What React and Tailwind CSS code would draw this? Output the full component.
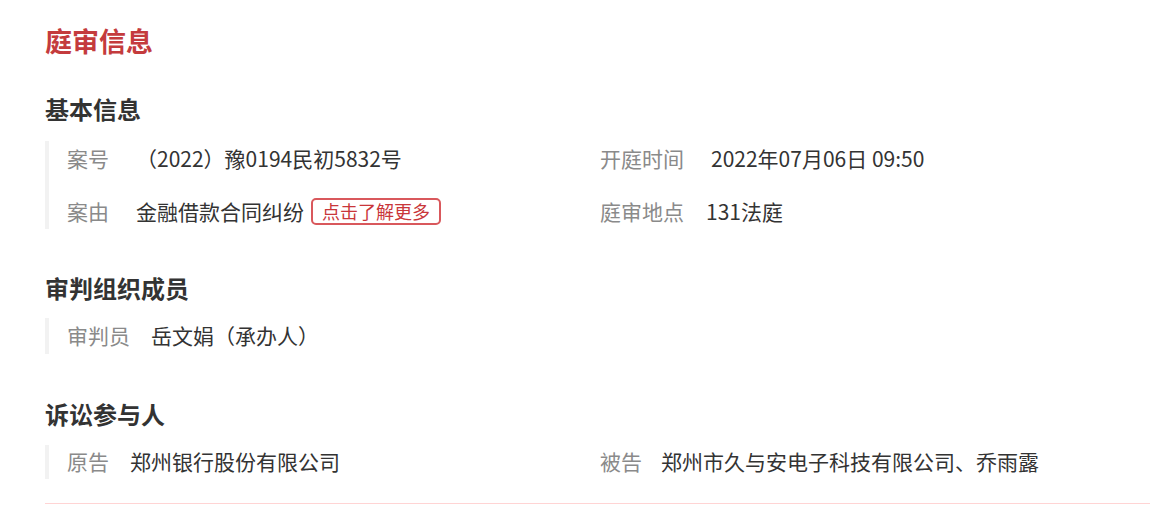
import React from 'react';

const basic = [
  [
    { label: '案号', value: '（2022）豫0194民初5832号', gap: 'ml-[27px]' },
    { label: '开庭时间', value: '2022年07月06日 09:50', gap: 'ml-[27px]' },
  ],
  [
    { label: '案由', value: '金融借款合同纠纷', gap: 'ml-[27px]', tag: '点击了解更多' },
    { label: '庭审地点', value: '131法庭', gap: 'ml-[22px]' },
  ],
];

const Field = ({ label, value, gap = 'ml-[21px]', tag }) => (
  <div className="flex items-center h-8 leading-8 whitespace-nowrap">
    <span className="text-[#8a8a8a]">{label}</span>
    <span className={`${gap} text-[#333]`}>{value}</span>
    {tag && (
      <span className="ml-[7px] h-[27px] leading-[23px] px-[9px] border-2 border-[#d9585c] rounded-[5px] text-[18px] text-[#c9363a]">
        {tag}
      </span>
    )}
  </div>
);

const Heading = ({ children, className = '' }) => (
  <h2 className={`text-[24px] leading-[36px] font-bold text-[#333] ${className}`}>{children}</h2>
);

const App = () => {
  return (
    <div
      className="bg-white w-[1150px] h-[510px] overflow-hidden pl-[45px] pt-[21px] text-[21px]"
      style={{ fontFamily: '"Noto Sans CJK SC", "Noto Sans", sans-serif' }}
    >
      <h1 className="text-[27px] leading-[40px] font-bold text-[#c43b3d]">庭审信息</h1>

      {/* 基本信息 */}
      <Heading className="mt-[30px]">基本信息</Heading>
      <div className="mt-[14px] border-l-4 border-[#f2f2f2] pl-[18px] pt-[1px] pb-[2px] flex flex-col gap-[21px]">
        {basic.map((row, i) => (
          <div key={i} className="grid grid-cols-[533px_1fr]">
            {row.map((f) => (
              <Field key={f.label} {...f} />
            ))}
          </div>
        ))}
      </div>

      {/* 审判组织成员 */}
      <Heading className="mt-[41px]">审判组织成员</Heading>
      <div className="mt-[12px] border-l-4 border-[#f2f2f2] pl-[18px] h-[36px] pb-[2px] flex items-center">
        <Field label="审判员" value="岳文娟（承办人）" />
      </div>

      {/* 诉讼参与人 */}
      <Heading className="mt-[42px]">诉讼参与人</Heading>
      <div className="mt-[13px] border-l-4 border-[#f2f2f2] pl-[18px] h-[34px] pb-[3px] grid grid-cols-[533px_1fr] items-center">
        <Field label="原告" value="郑州银行股份有限公司" />
        <Field label="被告" value="郑州市久与安电子科技有限公司、乔雨露" gap="ml-[19px]" />
      </div>

      <div className="mt-[24px] h-px bg-[#ffd4d4]" />
    </div>
  );
};

export default App;
